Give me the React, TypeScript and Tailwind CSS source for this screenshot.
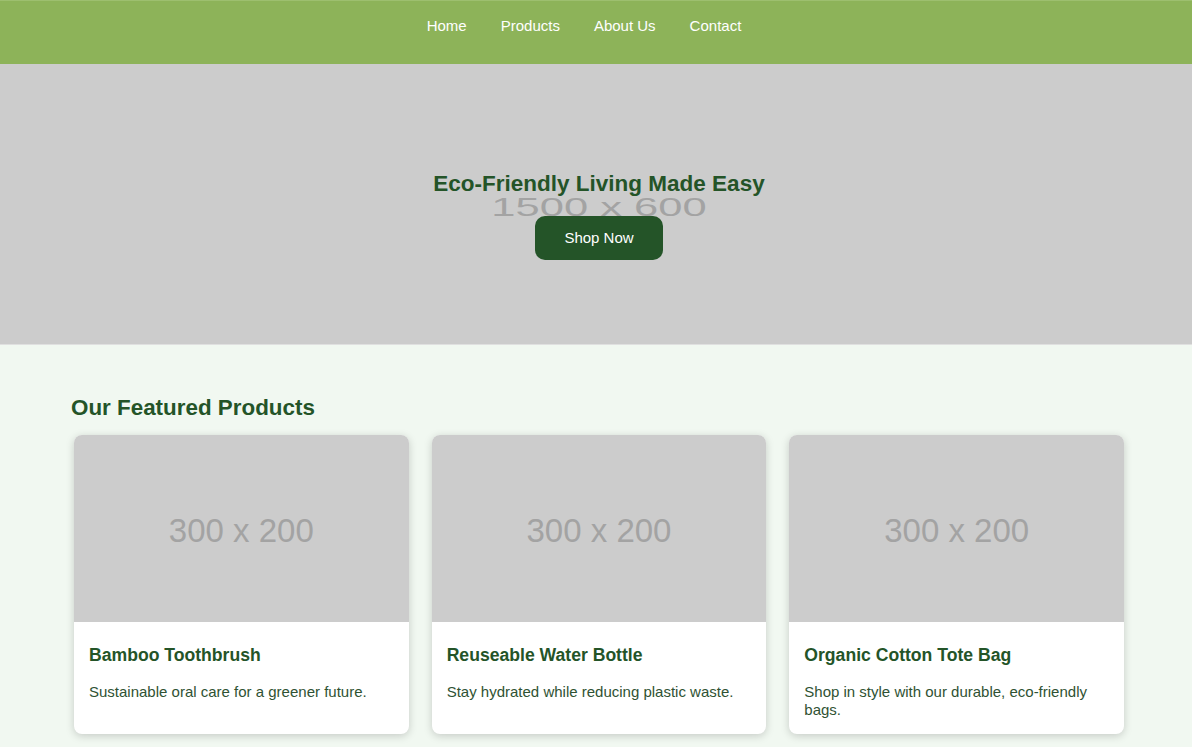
const products = [
  { title: 'Bamboo Toothbrush', desc: 'Sustainable oral care for a greener future.' },
  { title: 'Reuseable Water Bottle', desc: 'Stay hydrated while reducing plastic waste.' },
  { title: 'Organic Cotton Tote Bag', desc: 'Shop in style with our durable, eco-friendly bags.' },
];

export default function App() {
  return (
    <div className="min-h-screen bg-[#f1f8f1] font-['Liberation_Sans',Arial,sans-serif]">
      {/* Header */}
      <header className="h-[64px] bg-[#8db359] border-t border-[#9dbf6f]">
        <nav className="flex justify-center gap-[34px] pr-[24px] pt-[16px] text-[15px] leading-[18px] text-white">
          <a href="#">Home</a>
          <a href="#">Products</a>
          <a href="#">About Us</a>
          <a href="#">Contact</a>
        </nav>
      </header>

      {/* Hero */}
      <section className="relative h-[281px] overflow-hidden bg-[#cccccc] border-b border-[#e0e0e0]">
        <div className="absolute inset-x-0 top-[118px] flex justify-center pl-[6px]">
          <span className="scale-y-[0.6] text-[43.5px] leading-[50px] text-[#a3a3a3]">1500 x 600</span>
        </div>
        <div className="relative flex flex-col items-center pl-[6px] pt-[107px]">
          <h1 className="text-[22.5px] font-bold leading-[26px] text-[#245428]">
            Eco-Friendly Living Made Easy
          </h1>
          <button className="mt-[19px] h-[44px] rounded-[10px] bg-[#245428] px-[29px] text-[15px] text-white">
            Shop Now
          </button>
        </div>
      </section>

      {/* Featured products */}
      <section className="pl-[71px] pr-[65px] pt-[49px]">
        <h2 className="text-[22.4px] font-bold leading-[28px] text-[#245428]">Our Featured Products</h2>
        <div className="mt-[13px] grid grid-cols-3 gap-[23px] px-[3px]">
          {products.map((p) => (
            <div
              key={p.title}
              className="overflow-hidden rounded-[8px] bg-white shadow-[0_2px_8px_rgba(0,0,0,0.18)]"
            >
              <div className="flex h-[187px] items-center justify-center bg-[#cccccc] pt-[5px]">
                <span className="text-[33px] text-[#a3a3a3]">300 x 200</span>
              </div>
              <div className="px-[15px] pb-[16px] pt-[23px]">
                <h3 className="text-[17.6px] font-bold leading-[20px] text-[#245428]">{p.title}</h3>
                <p className="mt-[18px] text-[15px] leading-[17.5px] text-[#2f5233]">{p.desc}</p>
              </div>
            </div>
          ))}
        </div>
      </section>
    </div>
  );
}
